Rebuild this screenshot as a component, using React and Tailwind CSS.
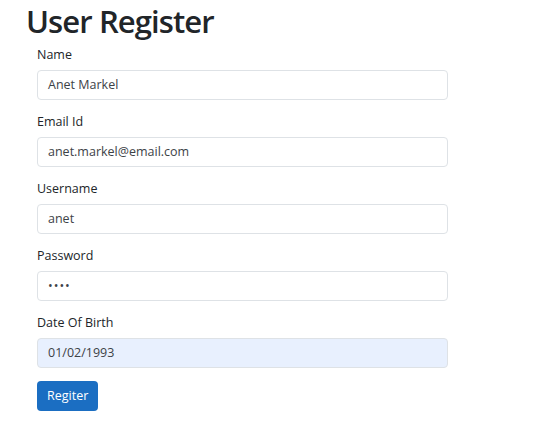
import React from 'react';

const fields = [
  { key: 'name', label: 'Name', value: 'Anet Markel' },
  { key: 'email', label: 'Email Id', value: 'anet.markel@email.com' },
  { key: 'username', label: 'Username', value: 'anet' },
  { key: 'password', label: 'Password', value: '••••', password: true },
  { key: 'dob', label: 'Date Of Birth', value: '01/02/1993', autofill: true }
];

export default function App() {
  return (
    <div className="min-h-screen bg-white text-[#212529]" style={{ fontFamily: '"Open Sans", "Noto Sans", sans-serif' }}>
      <h1 className="pl-[26px] pt-[1px] text-[31px] font-semibold leading-[40px] tracking-[-0.9px]">User Register</h1>
      <form className="ml-[37px] w-[411px] pt-[5px]" onSubmit={(e) => e.preventDefault()}>
        {fields.map((f) => (
          <div key={f.key} className="mb-[13px]">
            <label className="block text-[12.5px] leading-[17px] mb-[7px]">{f.label}</label>
            <div
              className={`flex h-[30px] items-center rounded-[4px] border border-[#dee2e6] px-[10px] text-[12.5px] text-[#3d4247] ${
                f.autofill ? 'bg-[#e8f0fe]' : 'bg-white'
              } ${f.password ? 'tracking-[1px] text-[11px]' : ''}`}
            >
              {f.value}
            </div>
          </div>
        ))}
        <button
          type="submit"
          className="h-[30px] rounded-[4px] bg-[#1b6ec2] px-[10px] text-[12.5px] text-white"
        >
          Regiter
        </button>
      </form>
    </div>
  );
}
